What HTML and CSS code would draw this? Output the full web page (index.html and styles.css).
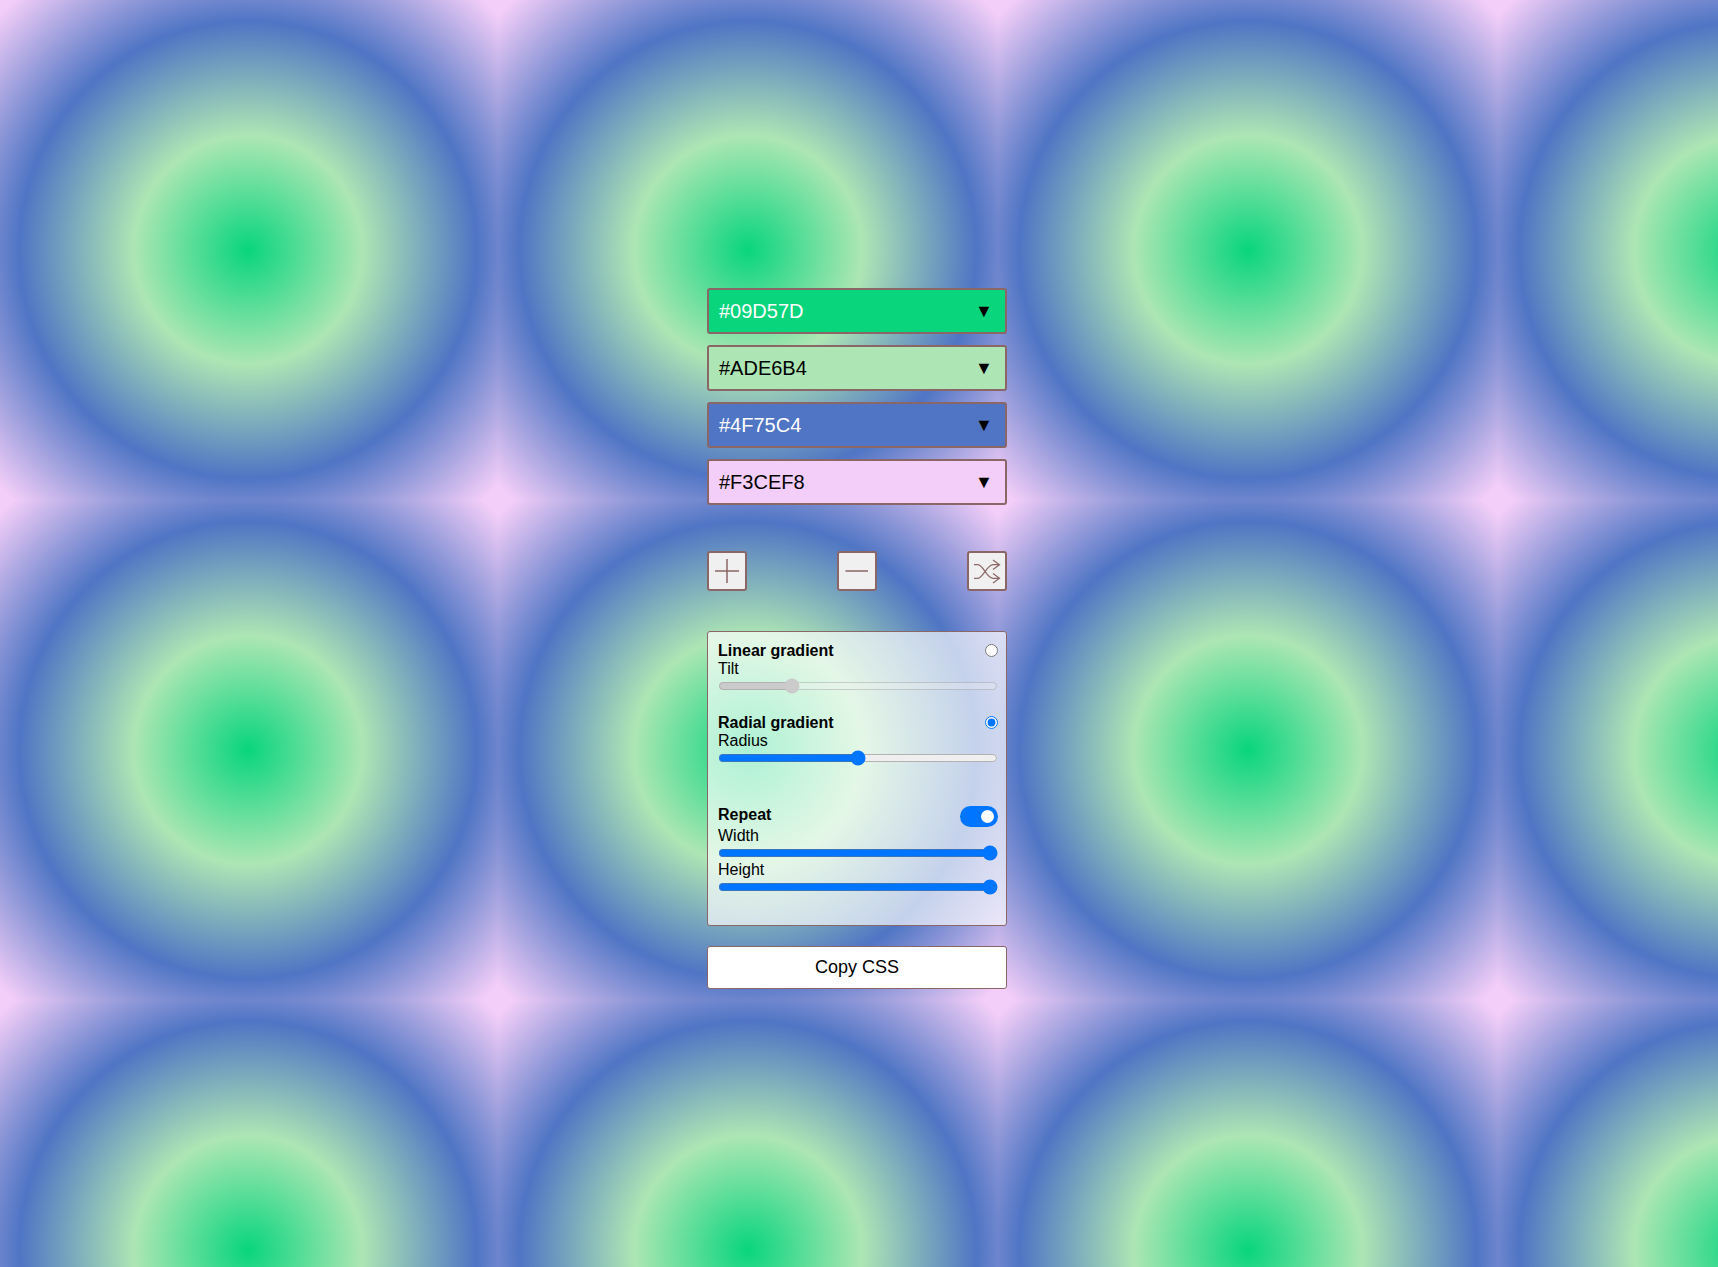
FILE: index.html
```html
<!DOCTYPE html>
<html lang="en">
<head>
    <meta charset="UTF-8">
    <meta name="viewport" content="width=device-width, initial-scale=1.0">
    <title>Gradient Generator</title>
    <link rel="stylesheet" href="styles.css">
</head>
<body>

    <div class="container">
        <div class="color-list">
            <div class="color-row" style="background-color: #09D57D; color: #fff;"><span>#09D57D</span><span class="arrow">▼</span></div>
            <div class="color-row" style="background-color: #ADE6B4; color: #000;"><span>#ADE6B4</span><span class="arrow">▼</span></div>
            <div class="color-row" style="background-color: #4F75C4; color: #fff;"><span>#4F75C4</span><span class="arrow">▼</span></div>
            <div class="color-row" style="background-color: #F3CEF8; color: #000;"><span>#F3CEF8</span><span class="arrow">▼</span></div>
        </div>

        <div class="tools">
            <button class="tool" aria-label="Add color">
                <svg width="36" height="36" viewBox="0 0 36 36"><path d="M18 6V30M6 18H30"/></svg>
            </button>
            <button class="tool" aria-label="Remove color">
                <svg width="36" height="36" viewBox="0 0 36 36"><path d="M6.5 18H29"/></svg>
            </button>
            <button class="tool shuffle" aria-label="Shuffle colors">
                <svg width="36" height="36" viewBox="0 0 36 36"><path d="M5 11.7H9C14 11.7 18 25.3 24 25.3H30M5 25.3H9C14 25.3 18 11.7 24 11.7H30M24 7L30.5 11.7L24 16.5M24 20.5L30.5 25.3L24 30"/></svg>
            </button>
        </div>

        <div class="panel">
            <div class="option">
                <div class="option-head"><label for="linear">Linear gradient</label><input type="radio" id="linear" name="type"></div>
                <div class="field-label">Tilt</div>
                <input type="range" min="0" max="360" value="90" disabled>
            </div>

            <div class="option">
                <div class="option-head"><label for="radial">Radial gradient</label><input type="radio" id="radial" name="type" checked></div>
                <div class="field-label">Radius</div>
                <input type="range" min="0" max="100" value="50">
            </div>

            <div class="option repeat">
                <div class="option-head"><label>Repeat</label><span class="toggle"></span></div>
                <div class="field-label">Width</div>
                <input type="range" min="0" max="100" value="100">
                <div class="field-label">Height</div>
                <input type="range" min="0" max="100" value="100">
            </div>
        </div>

        <button class="copy">Copy CSS</button>
    </div>

</body>
</html>
```

FILE: styles.css
```css
/* Global Styles */
html {
    background-image: radial-gradient(circle 343px, #09D57D, #ADE6B4, #4F75C4, #F3CEF8);
    background-size: 500px 500px;
    background-position: -2px 0;
}

body {
    font-family: 'Liberation Sans', Arial, sans-serif;
    color: #000;
    margin: 0;
    padding: 288px 4px 0 0;
    height: 979px;
    overflow: hidden;
}

.container {
    width: 300px;
    margin: 0 auto;
}

.color-list {
    display: flex;
    flex-direction: column;
    gap: 11px;
}

.color-row {
    height: 46px;
    box-sizing: border-box;
    border: 2px solid #8b6666;
    border-radius: 3px;
    padding: 0 9px 0 10px;
    display: flex;
    justify-content: space-between;
    align-items: center;
    font-size: 20px;
}

.arrow {
    color: #000;
    font-size: 18px;
    width: 24px;
    text-align: center;
    padding-top: 1px;
}

.tools {
    display: flex;
    justify-content: space-between;
    margin-top: 46px;
}

.tool {
    width: 40px;
    height: 40px;
    box-sizing: border-box;
    padding: 0;
    border: 2px solid #8b6666;
    border-radius: 3px;
    background-color: #f0f0f0;
    display: flex;
}

.tool svg {
    fill: none;
    stroke: #8b6666;
    stroke-width: 1.5;
}

.tool.shuffle svg {
    stroke-width: 1.2;
}

.panel {
    margin-top: 40px;
    height: 295px;
    box-sizing: border-box;
    border: 1px solid #8b6666;
    border-radius: 3px;
    padding: 10px;
    background-color: rgba(255, 255, 255, 0.67);
    font-size: 16px;
}

.option {
    margin-bottom: 20px;
}

.option.repeat {
    margin-top: 40px;
    margin-bottom: 0;
}

.option-head {
    display: flex;
    justify-content: space-between;
    align-items: flex-start;
}

.option-head label {
    font-weight: bold;
}

.option-head input {
    margin: 2px -2px 0 0;
}

input[type="range"] {
    display: block;
    width: calc(100% + 2px);
    box-sizing: border-box;
    margin: 0;
}

.repeat .option-head {
    height: 21px;
}

.toggle {
    width: 38px;
    height: 21px;
    border-radius: 11px;
    background-color: #0075ff;
    position: relative;
    margin-right: -2px;
}

.toggle::after {
    content: "";
    position: absolute;
    right: 4px;
    top: 4px;
    width: 13px;
    height: 13px;
    border-radius: 50%;
    background-color: #fff;
}

.copy {
    display: block;
    width: 100%;
    height: 43px;
    margin-top: 20px;
    border: 1px solid #8b6666;
    border-radius: 3px;
    background-color: #fff;
    font-family: inherit;
    font-size: 18px;
    color: #000;
}
```
